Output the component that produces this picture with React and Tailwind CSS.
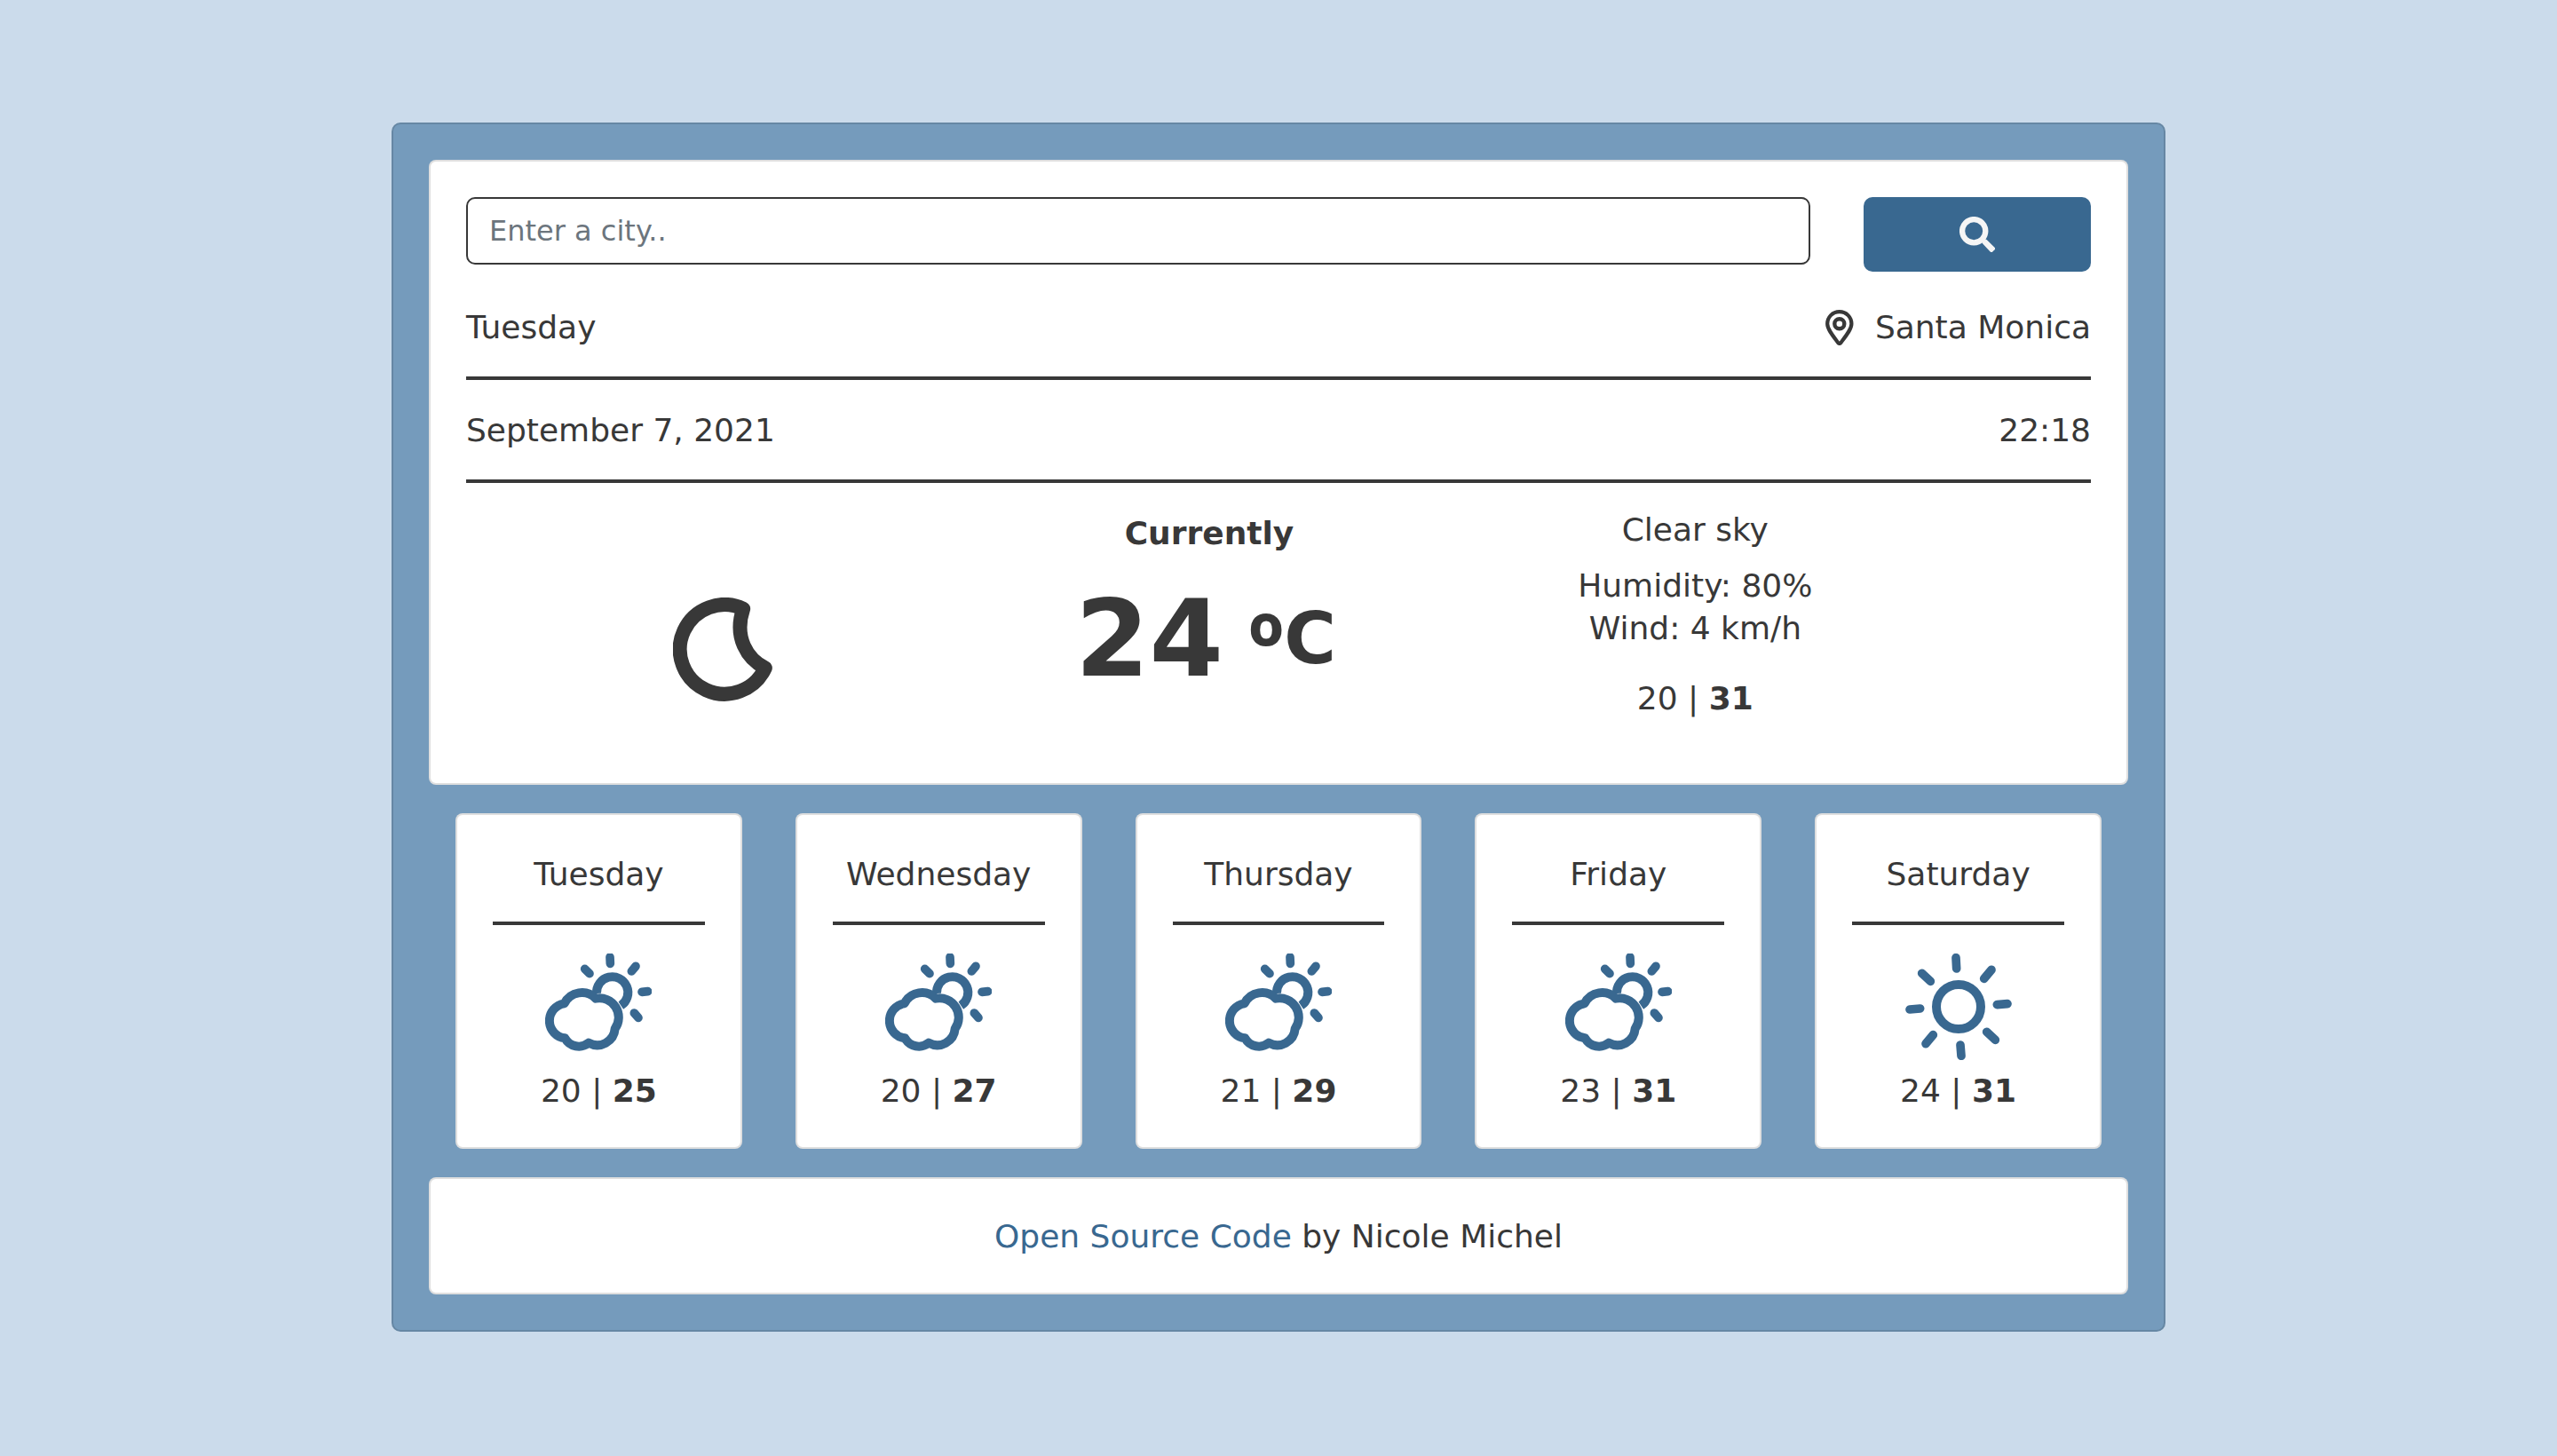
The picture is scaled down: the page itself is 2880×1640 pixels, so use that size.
const FORECAST = [
  { day: "Tuesday", low: 20, high: 25, icon: "cloud" },
  { day: "Wednesday", low: 20, high: 27, icon: "cloud" },
  { day: "Thursday", low: 21, high: 29, icon: "cloud" },
  { day: "Friday", low: 23, high: 31, icon: "cloud" },
  { day: "Saturday", low: 24, high: 31, icon: "sun" },
];

function SearchIcon() {
  return (
    <svg viewBox="0 0 40 40" className="size-10" fill="none" stroke="currentColor" aria-hidden="true">
      <circle cx="16.2" cy="16.2" r="13.1" strokeWidth="6.3" />
      <path
        d="M28 29.2L29.4 27.8L37.8 36L36 37.8Z"
        fill="currentColor"
        strokeWidth="4.4"
        strokeLinejoin="round"
      />
    </svg>
  );
}

function PinIcon() {
  return (
    <svg viewBox="0 0 32 40" className="h-10 w-8" fill="none" stroke="currentColor" aria-hidden="true">
      <path
        d="M15.8 2.1C8 2.1 2.200 8.2 2.200 15.800c0 6 6 13.200 12.200 21.400a1.700 1.700 0 0 0 2.800 0C23.400 29 29.400 21.800 29.400 15.800c0-7.600-5.800-13.700-13.600-13.700z"
        strokeWidth="4.200"
      />
      <circle cx="15.800" cy="15.800" r="5.500" strokeWidth="4.400" />
    </svg>
  );
}

function MoonIcon() {
  return (
    <svg viewBox="62 100 338 351" className="h-[117px] w-[113px]" fill="none" stroke="currentColor" role="img" aria-label="Clear night">
      <path
        d="M299 138A151 151 0 1 0 373 338C313 308 266 235 299 138Z"
        strokeWidth="48"
        strokeLinejoin="round"
      />
    </svg>
  );
}

function CloudSunIcon() {
  return (
    <svg viewBox="72 72 360 360" className="size-[120px]" fill="none" stroke="currentColor" strokeLinecap="round" strokeLinejoin="round" role="img" aria-label="Few clouds">
      <g strokeWidth="29">
        <path d="M291 84L292 106" />
        <path d="M206 124L222 140" />
        <path d="M378 115L364 132" />
        <path d="M399 202L419 200" />
        <path d="M373 273L387 289" />
      </g>
      <g strokeWidth="30">
        <path d="M246 207A53 53 0 1 1 328 248" strokeLinecap="butt" />
        <path d="M137 241A66 66 0 0 1 243 224A65 65 0 0 1 308 326A60 60 0 0 1 219 374A53 53 0 0 1 139 358A59 59 0 0 1 137 241Z" />
      </g>
    </svg>
  );
}

function SunIcon() {
  return (
    <svg viewBox="78 72 360 360" className="size-[120px]" fill="none" stroke="currentColor" strokeLinecap="round" role="img" aria-label="Clear sky">
      <circle cx="258" cy="252" r="75" strokeWidth="30" />
      <g strokeWidth="29">
        <path d="M249 86L251 123" />
        <path d="M369 127L344 157" />
        <path d="M423 242L388 245" />
        <path d="M353 337L382 364" />
        <path d="M264 381L267 418" />
        <path d="M172 347L147 377" />
        <path d="M93 261L128 258" />
        <path d="M134 139L163 166" />
      </g>
    </svg>
  );
}

function Temps({ low, high }) {
  return (
    <p>
      {low} | <strong>{high}</strong>
    </p>
  );
}

export default function App() {
  return (
    <div className="flex min-h-screen items-start justify-center bg-[#cbdbeb] px-10 pt-[138px] pb-[140px] font-['Verdana','DejaVu_Sans',sans-serif] text-4xl leading-[54px] text-[#383838]">
      <main className="flex w-full max-w-[1998px] flex-col gap-8 rounded-[10px] border-2 border-black/[.125] bg-[#759bbc] p-10">
        <section className="rounded-lg border-2 border-black/[.125] bg-white px-10 pt-10 pb-9">
          <form className="mb-1.5 flex items-start gap-[60px]" onSubmit={(e) => e.preventDefault()}>
            <input
              type="search"
              aria-label="City"
              placeholder="Enter a city.."
              className="h-[76px] min-w-0 flex-1 rounded-[10px] border-2 border-[#383838] bg-white px-6 text-[32px] leading-[48px] placeholder:text-[#6c757d]"
            />
            <button
              type="submit"
              aria-label="Search"
              className="flex h-[84px] w-64 items-center justify-center rounded-[10px] bg-[#396890] text-[#f5f5f5]"
            >
              <SearchIcon />
            </button>
          </form>
          <div className="flex items-center justify-between border-b-4 border-[#383838] pt-[30px] pb-7">
            <p>Tuesday</p>
            <p className="flex items-center gap-6">
              <PinIcon />
              Santa Monica
            </p>
          </div>
          <div className="flex items-center justify-between border-b-4 border-[#383838] pt-[30px] pb-7">
            <p>September 7, 2021</p>
            <p>22:18</p>
          </div>
          <div className="grid grid-cols-3 pr-[172px] pl-4 text-center">
            <div className="flex justify-center pt-[129px]">
              <MoonIcon />
            </div>
            <div className="pt-[30px]">
              <h2 className="font-bold">Currently</h2>
              <p className="flex items-start justify-center pt-6 pr-2 font-bold">
                <span className="mr-7 text-[120px] leading-[136px]">24</span>
                <span className="font-['Noto_Sans',sans-serif] text-[104px] leading-[148px]">º</span>
                <span className="text-[80px] leading-[136px]">C</span>
              </p>
            </div>
            <div className="pt-[26px]">
              <p>Clear sky</p>
              <div className="pt-3 pb-7 leading-[48px]">
                <p>Humidity: 80%</p>
                <p>Wind: 4 km/h</p>
              </div>
              <div className="pb-8">
                <Temps low={20} high={31} />
              </div>
            </div>
          </div>
        </section>

        <section className="grid grid-cols-5 gap-[60px] px-[30px]">
          {FORECAST.map(({ day, low, high, icon }) => (
            <article key={day} className="rounded-lg border-2 border-black/[.125] bg-white px-10 pt-10 pb-9 text-center">
              <h3 className="border-b-4 border-[#383838] pb-[26px]">{day}</h3>
              <div className="flex justify-center pt-8 pb-2 text-[#396890]">
                {icon === "sun" ? <SunIcon /> : <CloudSunIcon />}
              </div>
              <Temps low={low} high={high} />
            </article>
          ))}
        </section>

        <footer className="rounded-lg border-2 border-black/[.125] bg-white px-10 pt-[38px] pb-9 text-center">
          <a href="#source" className="text-[#396890]">Open Source Code</a> by Nicole Michel
        </footer>
      </main>
    </div>
  );
}
